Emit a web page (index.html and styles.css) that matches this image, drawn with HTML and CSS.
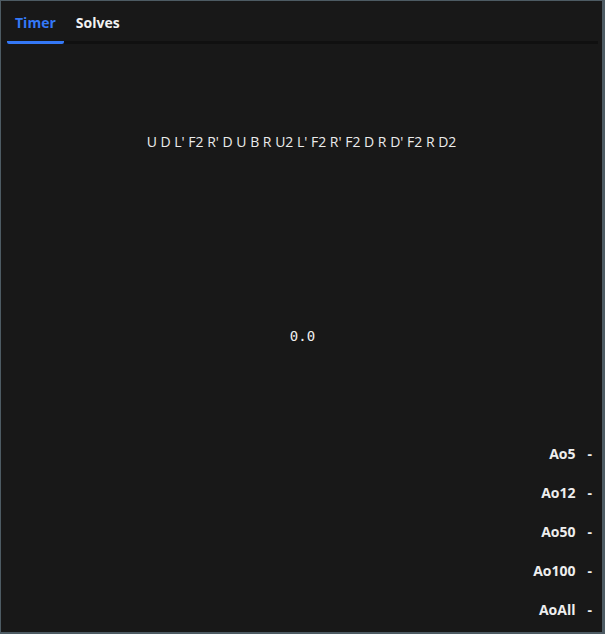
FILE: index.html
```html
<!DOCTYPE html>
<html>
<head>
<meta charset="utf-8">
<link rel="stylesheet" href="styles.css">
</head>
<body>
<div class="app">
  <div class="tabs">
    <div class="tab active">Timer</div>
    <div class="tab">Solves</div>
  </div>
  <div class="scramble">U D L' F2 R' D U B R U2 L' F2 R' F2 D R D' F2 R D2</div>
  <div class="time">0.0</div>
  <div class="stats">
    <div class="stat"><span class="label">Ao5</span><span class="val">-</span></div>
    <div class="stat"><span class="label">Ao12</span><span class="val">-</span></div>
    <div class="stat"><span class="label">Ao50</span><span class="val">-</span></div>
    <div class="stat"><span class="label">Ao100</span><span class="val">-</span></div>
    <div class="stat"><span class="label">AoAll</span><span class="val">-</span></div>
  </div>
</div>
</body>
</html>
```
FILE: styles.css
```css
html, body {
  margin: 0;
  padding: 0;
  height: 100%;
}
body {
  background: #4d5b63;
  padding: 1px 3px 2px 1px;
  box-sizing: border-box;
}
.app {
  height: 100%;
  background: #181818;
  color: #eeeeee;
  font-family: "Open Sans", sans-serif;
  font-size: 14px;
  display: flex;
  flex-direction: column;
}
.tabs {
  display: flex;
  margin: 6px 4px 0 6px;
  border-bottom: 3px solid #101010;
}
.tab {
  font-weight: 700;
  padding: 6px 8px 9px;
  color: #f2f2f2;
  margin-bottom: -3px;
  border-bottom: 3px solid transparent;
}
.tab.active {
  color: #3478f6;
  border-bottom-color: #3478f6;
  border-radius: 0 0 2px 2px;
}
.tab + .tab {
  margin-left: 4px;
}
.scramble {
  text-align: center;
  margin-top: 88px;
  color: #ececec;
}
.time {
  text-align: center;
  font-family: "DejaVu Sans Mono", monospace;
  font-size: 14px;
  margin-top: 177px;
  padding-left: 2px;
  color: #eeeeee;
}
.stats {
  margin-top: auto;
  display: flex;
  flex-direction: column;
  align-items: flex-end;
  gap: 19px;
  padding: 0 10px 12px 0;
}
.stat {
  display: flex;
  font-weight: 700;
  gap: 12px;
  line-height: 20px;
}
```
